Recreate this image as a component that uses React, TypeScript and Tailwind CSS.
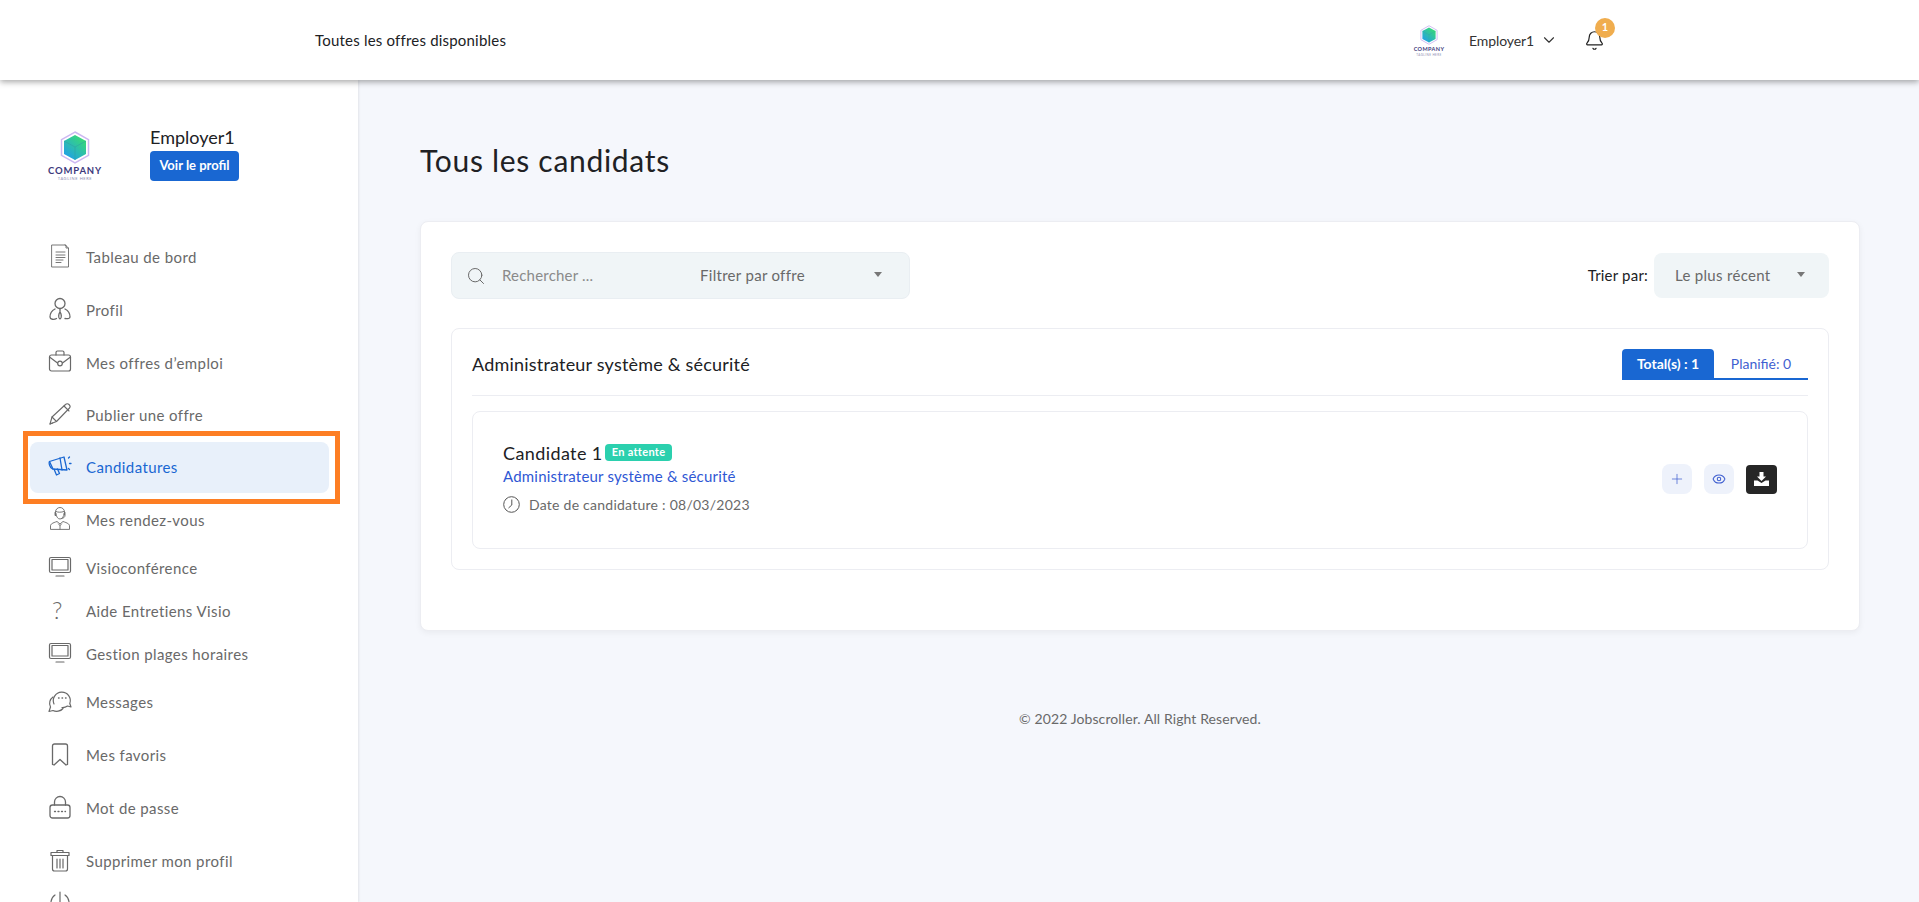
import type { ReactNode } from "react";
import { Search, Plus, ChevronDown, Bell, Eye } from "lucide-react";

function Svg({ children, size = 24 }: { children: ReactNode; size?: number }) {
  return (
    <svg width={size} height={size} viewBox="0 0 24 24" fill="none" stroke="currentColor" strokeWidth="1" strokeLinecap="round" strokeLinejoin="round">
      {children}
    </svg>
  );
}

const icons: Record<string, ReactNode> = {
  board: (
    <Svg>
      <path d="M4 1h14v3h2.500v19H4z" strokeWidth="0.9" />
      <path d="M17 1l3.500 3M8 8h9M8 11h9M8 13.500h9M8 16h7M8 18.500h5" strokeWidth="0.9" />
    </Svg>
  ),
  profile: (
    <Svg>
      <circle cx="12" cy="6.500" r="5" strokeWidth="1.300" />
      <path d="M7 12c-3 1.500-5 5-5 8 0 2.500 4 3 6.500 1.500M17 12c3 1.500 5 5 5 8 0 1.500-2 2-5 1.500" strokeWidth="1.300" />
      <path d="M12 12v3M12 15c-1.500 2-2 6 0 7 2-1 1.500-5 0-7z" strokeWidth="1.300" />
    </Svg>
  ),
  briefcase: (
    <Svg>
      <rect x="1.500" y="6" width="21" height="16" rx="2" strokeWidth="1.200" />
      <path d="M8 6V3.500C8 2.500 8.500 2 9.500 2h5c1 0 1.500.5 1.500 1.500V6M1.500 8l8 6M22.500 8l-8 6" strokeWidth="1.200" />
      <circle cx="12" cy="14.500" r="2.300" strokeWidth="1.200" />
    </Svg>
  ),
  pencil: (
    <Svg>
      <path d="M2 22l2-7L17.500 2.500c1-1 2.500-1 3.500 0s1.500 2.500.5 3.500L8.500 19.500z" strokeWidth="1.100" />
      <path d="M16 4l5 5M4 15l4.500 4.500M2 22l2.500-1" strokeWidth="1.100" />
    </Svg>
  ),
  megaphone: (
    <Svg>
      <path d="M1.500 7.500L16 3l3 13-14-1z" strokeWidth="1.300" />
      <path d="M1.500 7.500C.5 9 2 14 4.500 15M6 15l2.500 6 3-1.500-2-4.500M12 4l2 12" strokeWidth="1.300" />
      <path d="M20.500 4l1-1M21.500 9.500h1.500M20.500 14.500l1 1" strokeWidth="1.300" />
    </Svg>
  ),
  agent: (
    <Svg>
      <path d="M8 7.500c0 3 1.800 5.500 4 5.500s4-2.500 4-5.500" strokeWidth="0.900" />
      <path d="M7.500 9V6a4.500 4.500 0 0 1 9 0v3M7 6.500v3h1M17 6.500v3c0 1.500-1.500 3-3.500 3M8 5.500c2 1 5 1 8 0" strokeWidth="0.900" />
      <path d="M2.500 23v-3c0-2 2-3 6.500-4.500l3 2.500 3-2.500c4.500 1.500 6.500 2.500 6.500 4.500v3zM10.500 18l1.500 1.500 1.500-1.500M12 19.500V23" strokeWidth="0.900" />
    </Svg>
  ),
  screen: (
    <Svg>
      <rect x="1.500" y="2.500" width="21" height="15" rx="1.500" strokeWidth="1.200" />
      <rect x="4" y="4.500" width="16" height="10.500" strokeWidth="1.200" />
      <path d="M8 21h8" strokeWidth="1.200" />
    </Svg>
  ),
  chat: (
    <Svg>
      <path d="M6 15A8.500 8.500 0 1 1 21.800 14.500L23 18l-3.500-1A8.500 8.500 0 0 1 14 18.500" strokeWidth="1.200" />
      <path d="M5 8c-3 2-4.500 6.500-2.500 10L1 22.500l4-1c3 1.500 7.500 1 10-2" strokeWidth="1.200" />
      <path d="M10.500 9h.6M14 9h.6M17.500 9h.6" strokeWidth="1.300" />
    </Svg>
  ),
  bookmark: (
    <Svg>
      <path d="M4.500 22.500V4c0-1.500.8-2 2-2h11c1.200 0 2 .5 2 2v18.500l-1.500.5L12 17.500 6 23z" strokeWidth="1.300" />
    </Svg>
  ),
  lock: (
    <Svg>
      <rect x="2" y="10" width="20" height="13" rx="2.500" strokeWidth="1.300" />
      <path d="M6.500 10V7a5.500 5.500 0 0 1 11 0v3M6.500 16.500h1M10 16.500h1M13.500 16.500h1M17 16.500h.5" strokeWidth="1.300" />
    </Svg>
  ),
  trash: (
    <Svg>
      <path d="M3 4.500h18v3H3zM4.500 7.500V21c0 1.200.8 2 2 2h11c1.200 0 2-.8 2-2V7.500M9 4.500V2.500h6v2M9 11v9M12 11v9M15 11v9" strokeWidth="1.200" />
    </Svg>
  ),
  power: (
    <Svg>
      <path d="M12 2v10M7 5a9 9 0 1 0 10 0" strokeWidth="1.200" />
    </Svg>
  ),
};

const menu = [
  { label: "Tableau de bord", icon: "board", h: "h-[53px]" },
  { label: "Profil", icon: "profile", h: "h-[53px]" },
  { label: "Mes offres d’emploi", icon: "briefcase", h: "h-[52px]" },
  { label: "Publier une offre", icon: "pencil", h: "h-[53px]" },
  { label: "Candidatures", icon: "megaphone", h: "h-[51px]", active: true },
  { label: "Mes rendez-vous", icon: "agent", h: "h-[54px]" },
  { label: "Visioconférence", icon: "screen", h: "h-[43px]" },
  { label: "Aide Entretiens Visio", icon: "help", h: "h-[43px]" },
  { label: "Gestion plages horaires", icon: "screen", h: "h-[43px]" },
  { label: "Messages", icon: "chat", h: "h-[53px]" },
  { label: "Mes favoris", icon: "bookmark", h: "h-[53px]" },
  { label: "Mot de passe", icon: "lock", h: "h-[53px]" },
  { label: "Supprimer mon profil", icon: "trash", h: "h-[53px]" },
];

function CompanyLogo({ small }: { small?: boolean }) {
  return (
    <div className={small ? "flex h-[44px] w-[46px] flex-col items-center justify-center pt-[2px]" : "flex h-[88px] w-[90px] flex-col items-center justify-center pt-[3px]"}>
      <svg width={small ? 18 : 30} height={small ? 20 : 33} viewBox="0 0 30 33">
        <defs>
          <linearGradient id={small ? "cubeA" : "cubeB"} x1="0.100" y1="1" x2="0.900" y2="0">
            <stop offset="0" stopColor="#1f9bf0" />
            <stop offset="1" stopColor="#3be06a" />
          </linearGradient>
        </defs>
        <path d="M15 1l13.500 7.700v15.600L15 32 1.500 24.300V8.700z" fill="none" stroke="#cdb8f2" strokeWidth="1.500" />
        <path d="M15 4l11 6v13l-11 6-11-6V10z" fill={`url(#${small ? "cubeA" : "cubeB"})`} />
        <path d="M4 10l11 6 11-6M15 16v13" fill="none" stroke="#2fa3a3" strokeWidth="0.600" />
      </svg>
      <span className={small ? "mt-[1px] text-[5.500px] leading-[7px] font-bold tracking-[0.4px] text-[#3d3a7c]" : "mt-[1px] text-[9.500px] leading-[11px] font-bold tracking-[0.8px] text-[#3d3a7c]"}>COMPANY</span>
      <span className={small ? "text-[3px] leading-[4px] tracking-[0.4px] text-[#8d8bb0]" : "text-[4px] leading-[5px] tracking-[0.6px] text-[#8d8bb0]"}>TAGLINE HERE</span>
    </div>
  );
}

export default function App() {
  return (
    <div className="relative flex h-[902px] flex-col overflow-hidden bg-[#f5f7fc] font-['Lato',sans-serif]">
      <header className="z-10 flex h-20 shrink-0 items-center bg-white pl-[315px] shadow-[0_2px_6px_rgba(0,0,0,0.35)]">
        <span className="text-[15px] tracking-[0.2px] text-[#202124]">Toutes les offres disponibles</span>
        <div className="ml-auto mr-[314px] flex items-center">
          <CompanyLogo small />
          <span className="ml-[17px] text-[14px] tracking-[-0.1px] text-[#333]">Employer1</span>
          <ChevronDown className="ml-[6px] h-[18px] w-[18px] text-[#333]" strokeWidth={1.500} />
          <div className="relative ml-[26px]">
            <Bell className="h-[21px] w-[21px] text-[#222]" strokeWidth={1.400} />
            <span className="absolute -right-[10px] -top-[12px] flex h-5 w-5 items-center justify-center rounded-full bg-[#f0ad4e] text-[11px] font-bold text-white">1</span>
          </div>
        </div>
      </header>

      <div className="flex min-h-0 flex-1">
        <aside className="w-[358px] shrink-0 bg-white pt-[30px] shadow-[1px_0_2px_rgba(0,0,0,0.08)]">
          <div className="flex items-center pl-[30px]">
            <CompanyLogo />
            <div className="ml-[30px] pb-[2px]">
              <div className="text-[18px] leading-[24px] text-[#202124]">Employer1</div>
              <button className="mt-[2px] h-[30px] w-[89px] rounded bg-[#1967d2] text-[13px] font-bold text-white">Voir le profil</button>
            </div>
          </div>
          <nav className="mt-[33px] flex flex-col pl-[30px] pr-[29px]">
            {menu.map((item) => (
              <div key={item.label} className={`${item.h} flex shrink-0 items-center rounded-lg pl-[18px] text-[15px] tracking-[0.4px] ${item.active ? "bg-[#e8f0fa] text-[#1967d2]" : "text-[#696969]"}`}>
                <span className="flex w-[38px] shrink-0 items-center pb-1">
                  {item.icon === "help" ? (
                    <span className="pl-[4px] text-[24px] leading-none font-light">?</span>
                  ) : (
                    icons[item.icon]
                  )}
                </span>
                {item.label}
              </div>
            ))}
            {/* last entry is cut by the bottom of the window, only its icon top shows */}
            <div className="flex h-[24px] items-center pl-[18px] pt-[3px] text-[#696969]">{icons.power}</div>
          </nav>
        </aside>

        <main className="min-w-0 flex-1 pl-[62px] pt-[58px]">
          <h1 className="text-[30px] leading-[44px] font-normal tracking-[0.7px] text-[#202124]">Tous les candidats</h1>
          <section className="mt-[39px] h-[410px] w-[1440px] rounded-lg border border-[#ecedf2] bg-white px-[30px] pt-[30px] shadow-[0_2px_6px_rgba(0,0,0,0.05)]">
            <div className="flex items-center justify-between">
              <div className="flex h-[47px] w-[459px] items-center rounded-lg border border-[#e9eef2] bg-[#f0f5f7] pl-[14px]">
                <Search className="h-[20px] w-[20px] text-[#696969]" strokeWidth={1.200} />
                <span className="ml-[16px] w-[198px] text-[15px] tracking-[0.2px] text-[#8a8a8a]">Rechercher ...</span>
                <span className="text-[15px] tracking-[0.3px] text-[#696969]">Filtrer par offre</span>
                <span className="mb-[2px] ml-[69px] h-0 w-0 border-x-[4px] border-t-[5px] border-x-transparent border-t-[#777]"></span>
              </div>
              <div className="flex items-center">
                <span className="text-[15px] tracking-[0.2px] text-[#202124]">Trier par:</span>
                <div className="ml-[6px] flex h-[45px] w-[175px] items-center rounded-lg bg-[#f0f5f7] pl-[21px] text-[15px] tracking-[0.3px] text-[#696969]">
                  Le plus récent
                  <span className="mb-[2px] ml-[27px] h-0 w-0 border-x-[4px] border-t-[5px] border-x-transparent border-t-[#777]"></span>
                </div>
              </div>
            </div>

            <div className="mt-[29px] h-[242px] rounded-lg border border-[#ecedf2] px-5">
              <div className="flex h-[67px] items-end justify-between border-b border-[#ecedf2] pb-[15px]">
                <h3 className="pb-[4px] text-[18px] leading-[24px] font-normal tracking-[0.2px] text-[#202124]">Administrateur système &amp; sécurité</h3>
                <div className="flex h-[31px] w-[186px] border-b-2 border-[#1967d2] text-[14px]">
                  <span className="flex w-[92px] items-center justify-center rounded-t bg-[#1967d2] font-bold text-white">Total(s) : 1</span>
                  <span className="flex flex-1 items-center justify-center text-[#3f5fd0]">Planifié: 0</span>
                </div>
              </div>
              <div className="mt-[15px] flex h-[138px] items-center justify-between rounded-lg border border-[#ecedf2] pl-[30px] pr-[30px]">
                <div className="pb-[4px]">
                  <div className="flex items-center">
                    <span className="text-[18px] leading-[22px] tracking-[0.4px] text-[#202124]">Candidate 1</span>
                    <span className="ml-[2px] flex h-[17px] items-center rounded-sm bg-[#2bd0ae] px-[7px] text-[11px] font-bold tracking-[0.3px] text-white">En attente</span>
                  </div>
                  <div className="mt-[2px] text-[15px] leading-[20px] tracking-[0.2px] text-[#2f57d4]">Administrateur système &amp; sécurité</div>
                  <div className="mt-[8px] flex items-center text-[14px] tracking-[0.25px] text-[#696969]">
                    <svg width="17" height="17" viewBox="0 0 17 17" fill="none" stroke="#555" strokeWidth="1">
                      <circle cx="8.500" cy="8.500" r="7.800" />
                      <path d="M8.800 3.500v5.500L5.500 12" />
                    </svg>
                    <span className="ml-[9px]">Date de candidature : 08/03/2023</span>
                  </div>
                </div>
                <div className="flex items-center pb-[2px]">
                  <span className="flex h-[30px] w-[30px] items-center justify-center rounded-lg bg-[#eef2fb] text-[#3f5fd0]">
                    <Plus className="h-[16px] w-[16px]" strokeWidth={1.100} />
                  </span>
                  <span className="ml-[12px] flex h-[30px] w-[30px] items-center justify-center rounded-lg bg-[#eef2fb] text-[#3f5fd0]">
                    <Eye className="h-[14px] w-[14px]" strokeWidth={1.800} />
                  </span>
                  <span className="ml-[12px] flex h-[29px] w-[31px] items-center justify-center rounded bg-[#262626]">
                    <svg width="15" height="14" viewBox="0 0 15 14" fill="white">
                      <path d="M5.500 0h4v4.500h2.500L7.500 9 3 4.500h2.500zM0 8.500h3.500L7.500 11l4-2.500H15V14H0z" />
                    </svg>
                  </span>
                </div>
              </div>
            </div>
          </section>
          <footer className="mt-[78px] w-[1440px] text-center text-[14px] leading-5 tracking-[0.1px] text-[#696969]">© 2022 Jobscroller. All Right Reserved.</footer>
        </main>
      </div>

      {/* orange annotation around the active menu item */}
      <div className="pointer-events-none absolute left-[23px] top-[431px] h-[73px] w-[317px] border-[5px] border-[#fd7e23]"></div>
    </div>
  );
}
